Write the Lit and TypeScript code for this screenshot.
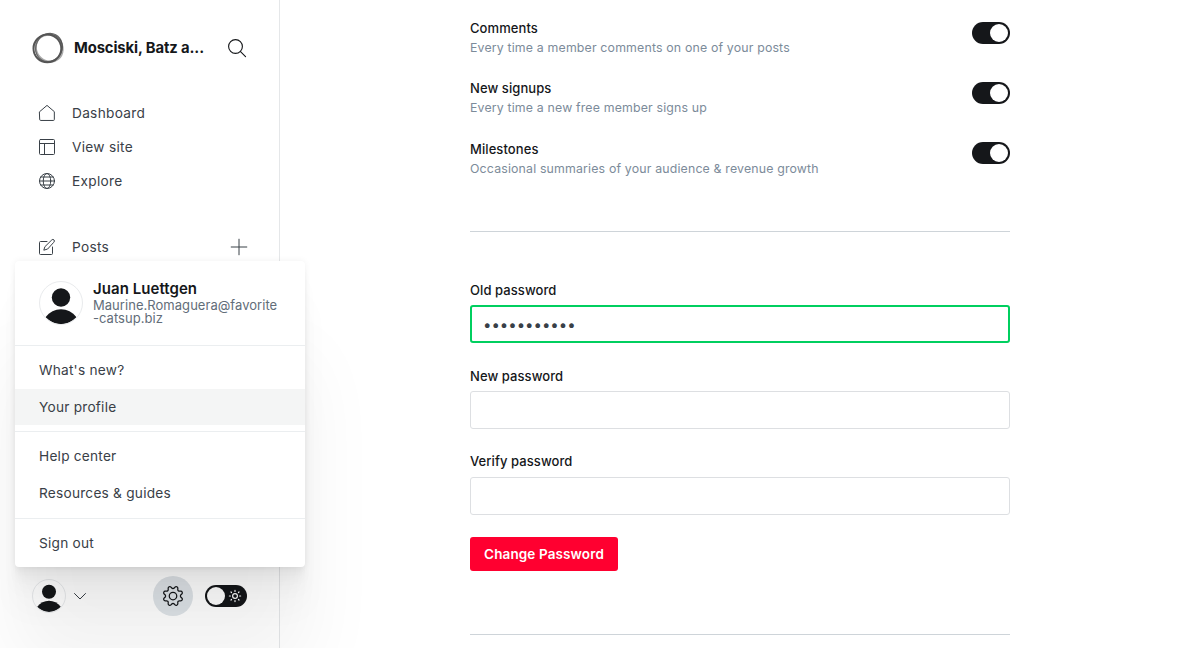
import { LitElement, html, svg, css } from "lit";
import { customElement, property } from "lit/decorators.js";

const icons: Record<string, unknown> = {
  house: svg`<path d="M1 10 12 .6 23 10v11.800a1.400 1.400 0 0 1-1.400 1.400H2.400A1.400 1.400 0 0 1 1 21.800z"/>`,
  layout: svg`<rect x=".75" y=".75" width="22.500" height="22.500" rx="1.500"/><path d="M.75 6.750h22.500M8.250 6.750v16.500"/>`,
  globe: svg`<circle cx="12" cy="12" r="11.250"/><ellipse cx="12" cy="12" rx="5.600" ry="11.250"/><path d="M.75 12h22.500M2.700 6h18.600M2.700 18h18.600"/>`,
  compose: svg`<path d="M12 3.750H2.250a1.500 1.500 0 0 0-1.500 1.500v16.500a1.500 1.500 0 0 0 1.500 1.500h16.500a1.500 1.500 0 0 0 1.500-1.500V12"/><path d="m12.400 15.200-5.200 1.600 1.600-5.200L19.200 1.400a2.200 2.200 0 0 1 3.300 3.200z"/>`,
  search: svg`<circle cx="10" cy="10" r="9.200"/><path d="m16.700 16.700 6.700 6.700"/>`,
  plus: svg`<path d="M12 .3v23.400M.3 12h23.400"/>`,
  chevron: svg`<path d="m1 7 11 11L23 7"/>`,
  gear: svg`<circle cx="12" cy="12" r="4.500"/><path d="M10.546 2.438a1.957 1.957 0 0 0 2.908 0L14.400 1.400a1.959 1.959 0 0 1 3.410 1.413l-.071 1.400A1.958 1.958 0 0 0 19.790 6.270l1.400-.071A1.959 1.959 0 0 1 22.600 9.600l-1.041.94a1.957 1.957 0 0 0 0 2.908l1.041.943a1.959 1.959 0 0 1-1.413 3.410l-1.400-.071a1.958 1.958 0 0 0-2.056 2.056l.071 1.400A1.959 1.959 0 0 1 14.400 22.600l-.941-1.041a1.957 1.957 0 0 0-2.908 0L9.600 22.600A1.959 1.959 0 0 1 6.200 21.192l.071-1.400a1.958 1.958 0 0 0-2.056-2.056l-1.400.071A1.958 1.958 0 0 1 1.400 14.400l1.041-.94a1.957 1.957 0 0 0 0-2.908L1.400 9.600A1.958 1.958 0 0 1 2.808 6.200l1.400.071a1.958 1.958 0 0 0 2.058-2.060L6.200 2.810A1.959 1.959 0 0 1 9.600 1.400z"/>`,
};

@customElement("line-icon")
export class LineIcon extends LitElement {
  @property() name = "";
  @property({ type: Number }) weight = 1.5;
  static styles = css`
    :host { display: block; flex: none; }
    svg { display: block; width: 100%; height: 100%; fill: none; stroke: currentColor;
      stroke-linecap: round; stroke-linejoin: round; overflow: visible; }
  `;
  render() {
    return html`<svg viewBox="0 0 24 24" stroke-width=${this.weight}>${icons[this.name]}</svg>`;
  }
}

@customElement("user-avatar")
export class UserAvatar extends LitElement {
  static styles = css`
    :host { display: block; flex: none; box-sizing: border-box; border: 1px solid #e9ebed; border-radius: 50%; overflow: hidden; }
    svg { display: block; width: 100%; height: 100%; fill: #15171a; }
  `;
  render() {
    return html`<svg viewBox="0 0 42 42"><circle cx="21" cy="15.500" r="9.200"/><path d="M5.500 35.200C9.500 30 15 27.200 21 27.200s11.500 2.800 15.500 8C32.500 39.600 27 42 21 42S9.500 39.600 5.500 35.200z"/></svg>`;
  }
}

@customElement("toggle-switch")
export class ToggleSwitch extends LitElement {
  static styles = css`
    :host { display: flex; flex: none; box-sizing: border-box; width: 38px; height: 22px; padding: 2px;
      border-radius: 11px; background: #15171a; justify-content: flex-end; }
    .knob { width: 18px; height: 18px; border-radius: 50%; background: #fff; }
  `;
  render() {
    return html`<span class="knob"></span>`;
  }
}

@customElement("app-root")
export class AppRoot extends LitElement {
  static styles = css`
    :host { display: flex; position: relative; width: 1200px; height: 648px; overflow: hidden; background: #fff;
      font-family: Inter, "Liberation Sans", sans-serif; font-size: 13.700px; color: #394047; letter-spacing: .22px; }
    .sidebar { box-sizing: border-box; width: 280px; border-right: 1px solid #e5e7e9; display: flex; flex-direction: column;
      padding: 32px; }
    .brand { display: flex; align-items: center; height: 32px; }
    .logo { width: 32px; height: 32px; flex: none; }
    .title { margin-left: 10px; width: 140px; padding-bottom: 1px; font-size: 14.800px; font-weight: 700; color: #15171a;
      letter-spacing: -.1px; white-space: nowrap; }
    .find { width: 18px; height: 18px; margin-left: 14px; color: #15171a; }
    .nav { display: flex; flex-direction: column; margin-top: 32px; }
    .link { display: flex; align-items: center; height: 34px; padding-left: 7px; letter-spacing: .28px; }
    .link line-icon { width: 16px; height: 16px; margin-right: 17px; }
    .link .add { width: 16px; height: 16px; margin: 0 0 0 auto; }
    .foot { display: flex; align-items: center; margin-top: auto; height: 40px; }
    .foot user-avatar { width: 34px; height: 34px; }
    .foot .chev { width: 12px; height: 12px; margin-left: 8px; }
    .cog { display: flex; align-items: center; justify-content: center; width: 40px; height: 40px; border-radius: 50%;
      background: #dfe4e8; margin-left: 67px; color: #15171a; }
    .cog line-icon { width: 20px; height: 20px; }
    .mode { box-sizing: border-box; display: flex; align-items: center; justify-content: space-between; width: 42px; height: 22px;
      margin-left: 12px; padding: 2px 6px 2px 2px; border-radius: 11px; background: #15171a; }
    .mode .knob { width: 18px; height: 18px; border-radius: 50%; background: #fff; }
    .mode svg { width: 12px; height: 12px; overflow: visible; }
    .main { width: 540px; margin-left: 190px; display: flex; flex-direction: column; }
    .settings { box-sizing: border-box; height: 232px; padding-top: 20px; border-bottom: 1px solid #ced4d9; }
    .setting { display: flex; justify-content: space-between; height: 60.300px; }
    .label { font-size: 13px; font-weight: 500; color: #15171a; line-height: 16px; letter-spacing: .08px; }
    .hint { font-size: 12.350px; line-height: 17px; margin-top: 3px; color: #7c8b9a; letter-spacing: .16px; }
    .setting toggle-switch { margin-top: 1.800px; }
    .form { display: flex; flex-direction: column; align-items: flex-start; padding-top: 50px; }
    .field { display: flex; flex-direction: column; width: 100%; height: 85.700px; }
    .field.last { height: 86px; }
    .field.last .input { margin-top: 7.600px; }
    .input { box-sizing: border-box; display: flex; align-items: center; height: 38px; margin-top: 7px; padding: 0 12px;
      border: 1px solid #dddfe2; border-radius: 3px; }
    .input.active { border: 2px solid #00cf5f; padding: 0 11px; }
    .dots { font-size: 15px; letter-spacing: -.02px; }
    .button { box-sizing: border-box; height: 34px; width: 148px; text-align: center; line-height: 34px; background: #ff0030;
      color: #fff; border-radius: 3px; font-weight: 600; font-size: 13.500px; letter-spacing: .12px; margin-top: -2.400px; }
    .rule { width: 100%; height: 1px; background: #ced4d9; margin-top: 63px; }
    .menu { position: absolute; left: 15px; top: 261px; width: 290px; height: 306px; border-radius: 4px; background: #fff;
      box-shadow: 0 0 7px rgba(0,0,0,.06), 0 2.800px 2.200px rgba(0,0,0,.013), 0 6.700px 5.300px rgba(0,0,0,.018),
        0 12.500px 10px rgba(0,0,0,.022), 0 22.300px 17.900px rgba(0,0,0,.024), 0 41.800px 33.400px rgba(0,0,0,.028),
        0 100px 80px rgba(0,0,0,.055); }
    .who { box-sizing: border-box; display: flex; height: 85px; padding: 20px 24px 0; border-bottom: 1px solid #ebeef0; }
    .who user-avatar { width: 44px; height: 44px; }
    .id { margin-left: 10px; margin-top: -1px; }
    .name { font-size: 15px; font-weight: 600; color: #15171a; line-height: 17px; letter-spacing: .05px; }
    .mail { font-size: 13px; line-height: 13px; color: #626d79; white-space: pre; margin-top: 2px; letter-spacing: .04px; }
    .group { display: flex; flex-direction: column; gap: 1px; padding: 6px 0; border-bottom: 1px solid #ebeef0; }
    .group.help { padding-bottom: 7px; }
    .group:last-child { border: 0; }
    .item { height: 36px; line-height: 36px; padding-left: 24px; }
    .item.on { background: #f4f5f5; }
  `;

  private link(icon: string, text: string, add = false) {
    return html`<div class="link"><line-icon name=${icon}></line-icon><span>${text}</span>${add
      ? html`<line-icon class="add" name="plus"></line-icon>` : ""}</div>`;
  }

  private setting(label: string, hint: string) {
    return html`<div class="setting"><div><div class="label">${label}</div><div class="hint">${hint}</div></div>
      <toggle-switch></toggle-switch></div>`;
  }

  render() {
    return html`
      <nav class="sidebar">
        <div class="brand">
          <svg class="logo" viewBox="0 0 32 32" fill="none">
            <ellipse cx="16.800" cy="15.300" rx="14" ry="13" transform="rotate(50 16 16)" stroke="#aaa" stroke-width="2.400"/>
            <ellipse cx="16.600" cy="15.100" rx="13" ry="14.400" transform="rotate(28 16 16)" stroke="#666" stroke-width="1.200"/>
            <circle cx="15.300" cy="16.500" r="13.900" stroke="#555" stroke-width="1.800"/>
            <ellipse cx="16" cy="16" rx="14.600" ry="13.700" transform="rotate(-35 16 16)" stroke="#555" stroke-width="1"/>
          </svg>
          <span class="title">Mosciski, Batz a...</span>
          <line-icon class="find" name="search"></line-icon>
        </div>
        <div class="nav">${this.link("house", "Dashboard")}${this.link("layout", "View site")}${this.link("globe", "Explore")}</div>
        <div class="nav">${this.link("compose", "Posts", true)}</div>
        <div class="foot">
          <user-avatar></user-avatar>
          <line-icon class="chev" name="chevron" weight="2"></line-icon>
          <div class="cog"><line-icon name="gear"></line-icon></div>
          <div class="mode"><span class="knob"></span>
            <svg viewBox="0 0 12 12" fill="none" stroke="#fff" stroke-width="1.200" stroke-linecap="round">
              <circle cx="6" cy="6" r="2.400"/>
              <path d="M6 .4v1M6 10.600v1M.4 6h1M10.600 6h1M2 2l.5.5M9.500 9.500l.5.5M10 2l-.5.5M2.500 9.500 2 10"/>
            </svg>
          </div>
        </div>
      </nav>
      <main class="main">
        <section class="settings">
          ${this.setting("Comments", "Every time a member comments on one of your posts")}
          ${this.setting("New signups", "Every time a new free member signs up")}
          ${this.setting("Milestones", "Occasional summaries of your audience & revenue growth")}
        </section>
        <section class="form">
          <div class="field"><span class="label">Old password</span><div class="input active"><span class="dots">•••••••••••</span></div></div>
          <div class="field"><span class="label">New password</span><div class="input"></div></div>
          <div class="field last"><span class="label">Verify password</span><div class="input"></div></div>
          <div class="button">Change Password</div>
          <div class="rule"></div>
        </section>
      </main>
      <div class="menu">
        <div class="who"><user-avatar></user-avatar>
          <div class="id"><div class="name">Juan Luettgen</div><div class="mail">Maurine.Romaguera@favorite
-catsup.biz</div></div></div>
        <div class="group"><div class="item">What's new?</div><div class="item on">Your profile</div></div>
        <div class="group help"><div class="item">Help center</div><div class="item">Resources &amp; guides</div></div>
        <div class="group"><div class="item">Sign out</div></div>
      </div>`;
  }
}
